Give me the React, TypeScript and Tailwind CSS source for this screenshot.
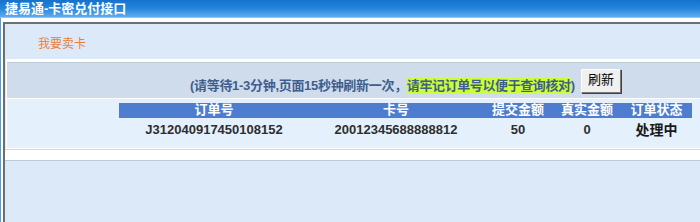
const COLS = ['订单号', '卡号', '提交金额', '真实金额', '订单状态']

const ORDER = {
    orderNo: 'J312040917450108152',
    cardNo: '20012345688888812',
    submitted: '50',
    actual: '0',
    status: '处理中',
}

export default function App() {
    return (
        <div className="w-[700px] h-[222px] overflow-hidden bg-white font-['Liberation_Sans','Noto_Sans_CJK_SC',sans-serif]">
            <div className="w-[820px]">
                {/* title bar */}
                <div className="h-[18px] bg-gradient-to-b from-[#1572cd] via-[#2486dc] to-[#5eaaf0] border-b border-[#8ccaf8] pl-[5px] text-[13px] font-bold leading-[17px] text-white">
                    捷易通-卡密兑付接口
                </div>

                <div className="flex h-[204px]">
                    <div className="w-[1px] bg-[#4aa0e8]" />
                    <div className="flex-1 pl-[2px] pt-[4px] bg-white">
                        <div className="h-full border-l-2 border-t-2 border-[#6e6e6e] bg-[#dce9f8]">
                            <div className="h-[35px] pl-[33px] pt-[5px] flex items-center text-[12px] text-[#e9803c]">
                                我要卖卡
                            </div>

                            <div className="ml-[1px] w-[798px] border-l border-t-[3px] border-b border-white">
                                <div className="h-[37px] border-t border-b border-t-[#bfcad8] border-b-white bg-[#cfdcec] flex items-end justify-center pb-[5px]">
                                    <span className="text-[13px] font-bold leading-[15px] text-[#3f5e8e]">
                                        <span className="tracking-[-0.3px]">{'(请等待1-3分钟,页面15秒钟刷新一次，'}</span>
                                        <span className="bg-[#ccff33] tracking-[-0.4px]">请牢记订单号以便于查询核对</span>
                                        {')'}
                                    </span>
                                    <button className="ml-[6px] w-[40px] h-[24px] bg-[#f0f0f0] border border-t-white border-l-white border-r-[#7a7a7a] border-b-[#7a7a7a] shadow-[1px_1px_0_#404040] text-[13px] text-black leading-[20px] pb-[3px]">
                                        刷新
                                    </button>
                                </div>

                                <div className="h-[49px] bg-[#e4f1fd] pt-[4px]">
                                    <div className="ml-[112px] w-[573px]">
                                        <div className="grid grid-cols-[190px_174px_70px_68px_71px] h-[15px] bg-[#4e7dd0] text-[13px] font-bold leading-[13px] text-white text-center">
                                            {COLS.map((c) => (
                                                <div key={c}>{c}</div>
                                            ))}
                                        </div>
                                        <div className="grid grid-cols-[190px_174px_70px_68px_71px] h-[24px] text-[13px] font-bold leading-[24px] text-[#2e2e2e] text-center">
                                            <div>{ORDER.orderNo}</div>
                                            <div>{ORDER.cardNo}</div>
                                            <div>{ORDER.submitted}</div>
                                            <div>{ORDER.actual}</div>
                                            <div className="text-[14px] text-[#1a1a1a]">{ORDER.status}</div>
                                        </div>
                                    </div>
                                </div>
                            </div>

                            <div className="h-[12px] bg-white border-t border-b border-t-[#d0d8e4] border-b-[#c0cad6]" />
                        </div>
                    </div>
                </div>
            </div>
        </div>
    )
}
